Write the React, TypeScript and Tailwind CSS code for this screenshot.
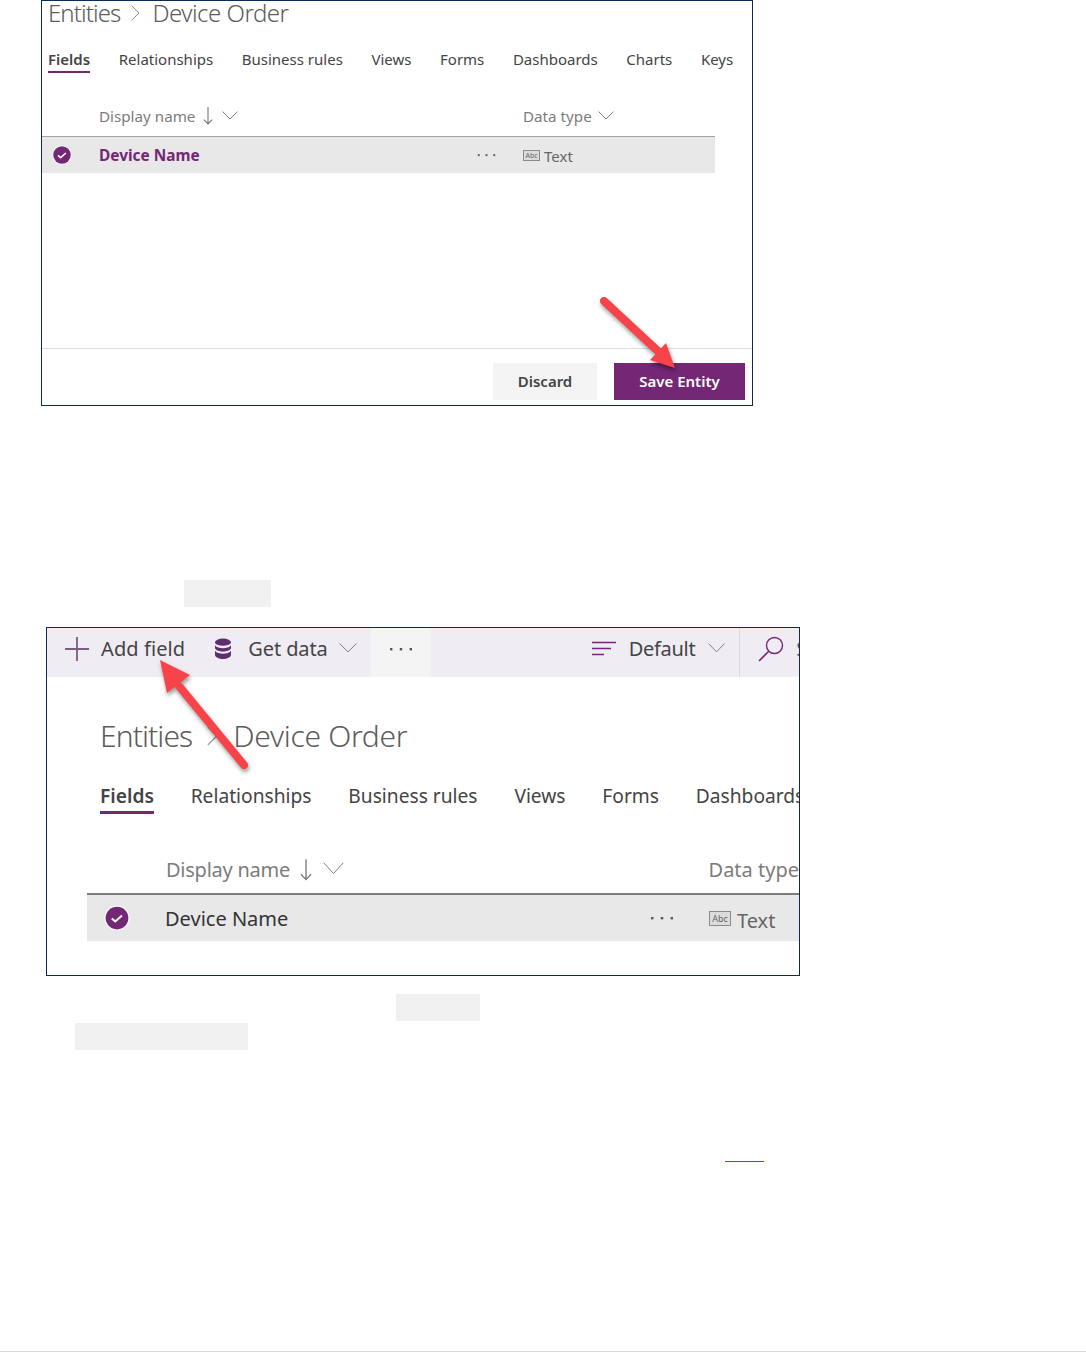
const font = 'font-["Noto_Sans",sans-serif]';

function CheckBadge({ className }: { className: string }) {
  return (
    <svg viewBox="0 0 24 24" className={className}>
      <circle cx="12" cy="12" r="11.5" fill="#ffffff" />
      <circle cx="12" cy="12" r="10.5" fill="#742774" />
      <path d="M7.2 12.4l3.2 2.8 6.2-5.6" fill="none" stroke="#ffffff" strokeWidth="1.9" />
    </svg>
  );
}

function Dots({ className }: { className: string }) {
  return (
    <svg viewBox="0 0 24 4" className={className}>
      <rect x="1" y="1" width="2.4" height="2.4" fill="#555555" />
      <rect x="10.8" y="1" width="2.4" height="2.4" fill="#555555" />
      <rect x="20.6" y="1" width="2.4" height="2.4" fill="#555555" />
    </svg>
  );
}

function AbcIcon({ className, textClass }: { className: string; textClass: string }) {
  return (
    <span className={`flex items-center justify-center border border-[#8a8a8a] bg-[#dcdcdc] ${className}`}>
      <span className={`leading-none text-[#666666] ${textClass}`}>Abc</span>
    </span>
  );
}

function Chevron({ className }: { className: string }) {
  return (
    <svg viewBox="0 0 16 9" preserveAspectRatio="none" className={`shrink-0 ${className}`}>
      <path d="M0.5 0.5L8 8L15.5 0.5" fill="none" stroke="#808080" strokeWidth="1" vectorEffect="non-scaling-stroke" />
    </svg>
  );
}

function Crumb({ className }: { className: string }) {
  return (
    <svg viewBox="0 0 9 16" className={className}>
      <path d="M0.7 0.7L8 8L0.7 15.3" fill="none" stroke="#909090" strokeWidth="1" />
    </svg>
  );
}

function SortArrow({ className }: { className: string }) {
  return (
    <svg viewBox="0 0 10 18" className={className}>
      <path d="M5 0V17M0.8 12.6L5 17L9.2 12.6" fill="none" stroke="#777777" strokeWidth="1.1" />
    </svg>
  );
}

function Arrow({ className, viewBox, line, head }: { className: string; viewBox: string; line: string; head: string }) {
  return (
    <svg viewBox={viewBox} className={`absolute drop-shadow-[1px_3px_2px_rgba(0,0,0,0.4)] ${className}`}>
      <path d={line} stroke="#f7444a" strokeWidth="8" strokeLinecap="round" fill="none" />
      <path d={head} fill="#f7444a" />
    </svg>
  );
}

function Database() {
  return (
    <svg viewBox="0 0 18 22" className="h-[22px] w-[18px]">
      <ellipse cx="9" cy="4.2" rx="8" ry="3.6" fill="#5c2d6f" />
      <path d="M1 7.2c1.5 2.2 4.5 3 8 3s6.5-.8 8-3v3c-1 2.2-4.5 3.2-8 3.2s-7-1-8-3.2z" fill="#5c2d6f" />
      <path d="M1 12.8c1.5 2.2 4.5 3 8 3s6.5-.8 8-3v4.4c-1 2.6-4.5 3.8-8 3.8s-7-1.2-8-3.8z" fill="#5c2d6f" />
    </svg>
  );
}

function SortLines() {
  return (
    <svg viewBox="0 0 24 16" className="h-[16px] w-[24px]">
      <path d="M0 1.5h24M0 7.5h19M0 13.5h12" stroke="#742774" strokeWidth="1.6" fill="none" />
    </svg>
  );
}

function PlusIcon() {
  return (
    <svg viewBox="0 0 24 24" className="h-[24px] w-[24px]">
      <path d="M0 12h24M12 0v24" stroke="#7c5c80" strokeWidth="1.8" fill="none" />
    </svg>
  );
}

function SearchIcon() {
  return (
    <svg viewBox="0 0 26 26" className="h-[26px] w-[26px] shrink-0">
      <circle cx="16.5" cy="9.5" r="8" fill="none" stroke="#742774" strokeWidth="1.4" />
      <path d="M10.8 15.2L1 25" stroke="#742774" strokeWidth="1.6" fill="none" />
    </svg>
  );
}

export default function App() {
  return (
    <div className={`relative h-[1352px] w-[1086px] overflow-hidden bg-white ${font}`}>
      {/* first screenshot: save entity */}
      <section className="relative ml-[41px] flex h-[406px] w-[712px] flex-col overflow-hidden border border-[#0c2a57] bg-white">
        <div className="-mt-[2px] flex h-[32px] items-center pl-[6px] text-[24px] leading-[28px] text-[#5c5c5c]">
          <span className="-mt-[4px] font-light tracking-[-0.9px]">Entities</span>
          <Crumb className="-mt-[4px] ml-[11px] mr-[12px] h-[16px] w-[9px]" />
          <span className="-mt-[4px] font-light tracking-[-0.5px]">Device Order</span>
        </div>
        <nav className="mt-[16px] flex gap-[28.6px] pl-[6px] text-[15px] leading-[24px] text-[#444444]">
          <span className="border-b-2 border-[#742774] font-semibold leading-[24px]">Fields</span>
          <span>Relationships</span>
          <span>Business rules</span>
          <span>Views</span>
          <span>Forms</span>
          <span>Dashboards</span>
          <span>Charts</span>
          <span>Keys</span>
        </nav>
        <div className="mt-[28px] flex h-[36px] w-[673px] items-center border-b border-[#a3a3a3] pb-[4px] text-[15.2px] text-[#7c7c7c]">
          <div className="flex w-[481px] items-center pl-[57px]">
            <span>Display name</span>
            <SortArrow className="ml-[8px] h-[18px] w-[10px]" />
            <Chevron className="-mt-[2px] ml-[9px] h-[9px] w-[16px]" />
          </div>
          <span>Data type</span>
          <Chevron className="-mt-[2px] ml-[6px] h-[9px] w-[16px]" />
        </div>
        <div className="flex h-[36px] w-[673px] items-center bg-[#e8e8e8] text-[15px]">
          <div className="flex w-[435px] items-center pl-[10px]">
            <CheckBadge className="h-[20px] w-[20px]" />
            <span className="ml-[27px] mt-[2px] text-[15.4px] font-bold text-[#742774]">Device Name</span>
          </div>
          <Dots className="h-[4px] w-[19px]" />
          <AbcIcon className="ml-[27px] h-[11px] w-[17px]" textClass="text-[7px]" />
          <span className="ml-[4px] mt-[2px] text-[#666666]">Text</span>
        </div>
        <footer className="mt-auto flex h-[57px] justify-end gap-[17px] border-t border-[#dddddd] pr-[7px] pt-[14px] text-[15px] font-semibold">
          <button className="h-[37px] w-[104px] bg-[#f4f4f4] text-[#444444]">Discard</button>
          <button className="h-[37px] w-[131px] bg-[#742774] text-white">Save Entity</button>
        </footer>
        <Arrow
          className="left-[550px] top-[285px] h-[95px] w-[95px]"
          viewBox="550 285 95 95"
          line="M562 300L618 352"
          head="M633 367L608 359L624 342Z"
        />
      </section>

      <div className="ml-[184px] mt-[174px] h-[27px] w-[87px] bg-[#f0f0f0]" />

      {/* second screenshot: add field */}
      <section className="relative ml-[46px] mt-[20px] h-[349px] w-[754px] overflow-hidden border border-[#0c2a57] bg-white">
        <div className="flex h-[49px] items-center whitespace-nowrap bg-[#f0ecf4] pb-[8px] text-[20px] text-[#444444]">
          <span className="ml-[18px] shrink-0"><PlusIcon /></span>
          <span className="ml-[12px] shrink-0 tracking-[0.1px]">Add field</span>
          <span className="ml-[29px] shrink-0"><Database /></span>
          <span className="ml-[16px] shrink-0 tracking-[-0.1px]">Get data</span>
          <Chevron className="-mt-[2px] ml-[11px] h-[10px] w-[18px]" />
          <div className="ml-[14px] flex h-[49px] w-[60px] shrink-0 items-center justify-center self-start bg-[#f4f4f4] pb-[8px]">
            <Dots className="h-[4px] w-[24px]" />
          </div>
          <span className="ml-[161px] shrink-0"><SortLines /></span>
          <span className="ml-[13px] shrink-0 tracking-[-0.3px]">Default</span>
          <Chevron className="-mt-[2px] ml-[13px] h-[10px] w-[17px]" />
          <div className="ml-[14px] flex h-[49px] shrink-0 items-center self-start border-l border-[#dcd8e0] pb-[8px] pl-[18px]">
            <SearchIcon />
            <span className="ml-[12px] text-[#5c5c5c]">Search</span>
          </div>
        </div>
        <div className="ml-[53px] mt-[39px] flex items-center text-[30px] leading-[40px] text-[#5c5c5c]">
          <span className="font-light tracking-[-0.9px]">Entities</span>
          <Crumb className="ml-[15px] mr-[15px] h-[20px] w-[11px]" />
          <span className="font-light tracking-[-0.3px]">Device Order</span>
        </div>
        <nav className="ml-[53px] mt-[25px] flex gap-[36.8px] whitespace-nowrap text-[19.2px] leading-[30px] text-[#444444]">
          <span className="border-b-[3px] border-[#742774] font-semibold">Fields</span>
          <span>Relationships</span>
          <span>Business rules</span>
          <span>Views</span>
          <span>Forms</span>
          <span>Dashboards</span>
        </nav>
        <div className="ml-[40px] mt-[35px] flex h-[46px] items-center whitespace-nowrap border-b-2 border-[#7c7c7c] pb-[2px] text-[20px] text-[#7c7c7c]">
          <div className="flex w-[622px] items-center pl-[79px]">
            <span className="tracking-[-0.25px]">Display name</span>
            <SortArrow className="ml-[10px] h-[22px] w-[12px]" />
            <Chevron className="-mt-[3px] ml-[11px] h-[13px] w-[21px]" />
          </div>
          <span>Data type</span>
        </div>
        <div className="ml-[40px] flex h-[46px] items-center bg-[#e8e8e8] text-[20px]">
          <div className="flex w-[563px] items-center pl-[17px]">
            <CheckBadge className="h-[26px] w-[26px]" />
            <span className="ml-[35px] mt-[2px] text-[#333333]">Device Name</span>
          </div>
          <Dots className="h-[4px] w-[24px]" />
          <AbcIcon className="ml-[35px] h-[15px] w-[22px]" textClass="text-[9px]" />
          <span className="ml-[6px] mt-[6px] text-[#666666]">Text</span>
        </div>
        <Arrow
          className="left-[100px] top-[20px] h-[130px] w-[110px]"
          viewBox="100 20 110 130"
          line="M197 137L132 58"
          head="M113 32L143 47L120 65Z"
        />
      </section>

      <div className="ml-[396px] mt-[18px] h-[27px] w-[84px] bg-[#f0f0f0]" />
      <div className="ml-[75px] mt-[2px] h-[27px] w-[173px] bg-[#f0f0f0]" />
      <div className="ml-[725px] mt-[111px] h-px w-[39px] bg-[#0f6cbd]" />
      <div className="absolute bottom-0 left-0 h-px w-full bg-[#d9d9d9]" />
    </div>
  );
}
